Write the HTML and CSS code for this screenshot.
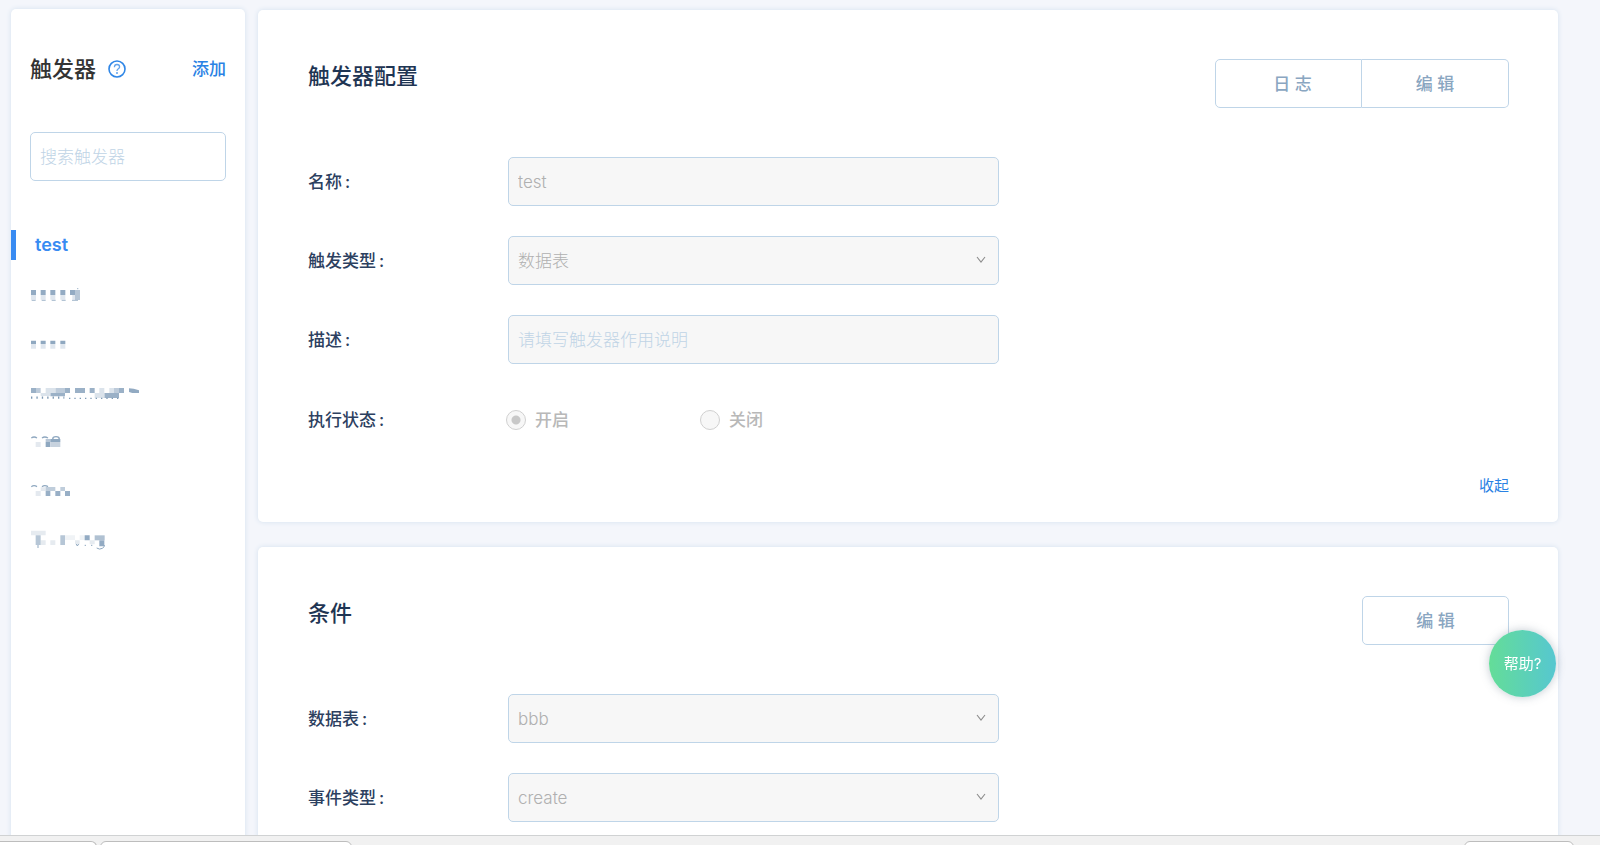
FILE: index.html
```html
<!DOCTYPE html>
<html lang="zh-CN">
<head>
<meta charset="utf-8">
<title>触发器</title>
<link rel="stylesheet" href="styles.css">
</head>
<body>
<div class="workspace">
  <aside class="sidebar">
    <header class="sidebar-head">
      <h1 class="sidebar-title">触发器</h1>
      <a class="hint" href="#" aria-label="说明">
        <svg class="hint-icon" viewBox="0 0 18 18" fill="none"><circle cx="9" cy="9" r="8" stroke="#2f86e6" stroke-width="1.6"/><path d="M6.4 7.3C6.4 5.5 7.5 4.5 9 4.5s2.6 1 2.6 2.4c0 1.8-2.6 1.9-2.6 3.9v.3" stroke="#62a3ec" stroke-width="1.3"/><circle cx="9" cy="13.1" r="1" fill="#62a3ec"/></svg>
      </a>
      <a class="add-link" href="#">添加</a>
    </header>
    <input class="control search" type="text" placeholder="搜索触发器" aria-label="搜索触发器">
    <ul class="trigger-list">
      <li class="trigger active"><a href="#">test</a></li>
      <li class="trigger"><svg class="mosaic" viewBox="90 216 360 72">
        <path fill="#93abc3" d="M93 240h15v15H93zM122 240h15v15h-15zM151 240h15v15h-15zM181 240h15v15h-15zM210 240h15v15h-15z"/>
        <path fill="#dfe6ee" d="M93 255h15v14H93zM122 255h15v14h-15zM151 255h15v14h-15zM181 255h15v14h-15zM217 255h8v14h-8z"/>
        <path fill="#b6c6d6" d="M225 240h15v30h-15z"/><path stroke="#a4b8cc" stroke-width="3" d="M95 271h12M125 271h12M155 271h12M185 271h12M216 271h18M231 236h4"/></svg></li>
      <li class="trigger"><svg class="mosaic" viewBox="90 363 360 72">
        <path fill="#8fa8c0" d="M93 392h15v10H93zM122 392h15v10h-15zM151 392h15v10h-15zM181 392h15v10h-15z"/>
        <path fill="#dfe6ee" d="M93 402h15v14H93zM122 402h15v14h-15zM151 402h15v14h-15zM181 402h15v14h-15z"/></svg></li>
      <li class="trigger"><svg class="mosaic" viewBox="90 510 360 72">
        <path fill="#9bb1c7" d="M93 534h15v15H93zM195 534h15v15h-15zM225 534h30v15h-30zM269 534h15v15h-15zM357 534h15v15h-15zM151 549h44v10h-44zM313 549h44v15h-44z"/>
        <path fill="#bdcbda" d="M108 534h14v15h-14zM166 534h29v15h-29zM342 534h15v15h-15z"/>
        <path fill="#dbe3eb" d="M137 534h29v15h-29zM122 549h29v9h-29zM298 534h15v15h-15zM328 534h14v15h-14zM284 549h29v15h-29z"/>
        <path fill="#92aac2" d="M387 535l14 1 16 5v8h-20l-10-3z"/><path stroke="#7e9ab5" stroke-width="7" stroke-dasharray="4 12.2" d="M93 563h100"/><path stroke="#7e9ab5" stroke-width="4" stroke-dasharray="4 12" d="M207 565h150"/></svg></li>
      <li class="trigger"><svg class="mosaic" viewBox="90 657 360 72">
        <path fill="none" stroke="#8fa8c0" stroke-width="4" d="M94 684q8-6 17 0M126 684q8-6 18 0M158 688q0-8 10-8t10 8"/>
        <path fill="#e4e9ef" d="M107 696h15v15h-15z"/><path fill="#b7c6d6" d="M137 687h14v9h-14z"/><path fill="#8fa8c0" d="M137 696h14v15h-14zM151 687h30v9h-30z"/><path fill="#c7d2de" d="M151 696h30v15h-30z"/></svg></li>
      <li class="trigger"><svg class="mosaic" viewBox="90 804 360 72">
        <path fill="none" stroke="#8fa8c0" stroke-width="4" d="M94 830q8-6 17 0M126 830q8-6 18 0"/>
        <path fill="#e4e9ef" d="M107 843h15v15h-15zM122 832h15v11h-15z"/><path fill="#bfcddb" d="M137 831h29v12h-29zM181 831h14v12h-14z"/><path fill="#98afc6" d="M137 843h14v15h-14zM166 843h15v15h-15zM195 843h15v15h-15z"/></svg></li>
      <li class="trigger"><svg class="mosaic" viewBox="90 951 360 72">
        <path fill="#e6ebf0" d="M93 962h44v14H93zM122 991h15v14h-15zM151 991h15v14h-15zM225 991h14v12h-14zM269 991h15v12h-15z"/>
        <path fill="#b6c6d6" d="M107 976h15v29h-15zM181 976h14v29h-14z"/><path fill="#f0f3f6" d="M195 976h30v14h-30zM239 976h15v14h-15z"/><path fill="#93abc3" d="M254 976h15v15h-15zM298 991h15v18h-15z"/><path fill="#b0c1d2" d="M284 976h30v15h-30z"/>
        <path fill="none" stroke="#8fa8c0" stroke-width="3" d="M114 1005v9M229 1002l3 6 4-6M254 1006h4M273 1006h4M290 1014q9 6 17 1t6-10"/></svg></li>
    </ul>
  </aside>

  <main class="content">
    <section class="panel">
      <header class="panel-head">
        <h2 class="panel-title">触发器配置</h2>
        <div class="actions">
          <button class="action" type="button">日 志</button><button class="action" type="button">编 辑</button>
        </div>
      </header>
      <form class="fields">
        <div class="field">
          <label class="label" for="name">名称<span class="colon">:</span></label>
          <input class="control" id="name" type="text" value="test" disabled>
        </div>
        <div class="field">
          <label class="label" for="type">触发类型<span class="colon">:</span></label>
          <div class="select"><select class="control" id="type" disabled><option>数据表</option></select><svg class="chevron" viewBox="0 0 10 8"><path d="M1 1l4 5 4-5"/></svg></div>
        </div>
        <div class="field">
          <label class="label" for="desc">描述<span class="colon">:</span></label>
          <input class="control" id="desc" type="text" placeholder="请填写触发器作用说明" disabled>
        </div>
        <div class="field field-radio">
          <span class="label" id="state">执行状态<span class="colon">:</span></span>
          <div class="radios" role="radiogroup" aria-labelledby="state">
            <label class="radio"><input type="radio" name="state" checked disabled>开启</label>
            <label class="radio"><input type="radio" name="state" disabled>关闭</label>
          </div>
        </div>
      </form>
      <div class="panel-foot"><a href="#">收起</a></div>
    </section>

    <section class="panel">
      <header class="panel-head">
        <h2 class="panel-title">条件</h2>
        <div class="actions"><button class="action" type="button">编 辑</button></div>
      </header>
      <form class="fields">
        <div class="field">
          <label class="label" for="table">数据表<span class="colon">:</span></label>
          <div class="select"><select class="control" id="table" disabled><option>bbb</option></select><svg class="chevron" viewBox="0 0 10 8"><path d="M1 1l4 5 4-5"/></svg></div>
        </div>
        <div class="field">
          <label class="label" for="event">事件类型<span class="colon">:</span></label>
          <div class="select"><select class="control" id="event" disabled><option>create</option></select><svg class="chevron" viewBox="0 0 10 8"><path d="M1 1l4 5 4-5"/></svg></div>
        </div>
      </form>
    </section>
  </main>
</div>
<footer class="dock">
  <div class="tab tab-first"></div>
  <div class="tab tab-wide"></div>
  <div class="tab tab-last"></div>
</footer>
<button class="help" type="button">帮助?</button>
</body>
</html>
```
FILE: styles.css
```css
* { box-sizing: border-box; }
body {
  margin: 0;
  height: 100vh;
  display: flex;
  flex-direction: column;
  overflow: hidden;
  background: #f4f6fb;
  color: #1f3553;
  font: 17px/24px Inter, "Noto Sans CJK SC", sans-serif;
}
h1, h2, ul { margin: 0; padding: 0; }
a { color: #2a82e4; text-decoration: none; }
button, input, select { font: inherit; }

.workspace {
  flex: 1;
  min-height: 0;
  display: flex;
  gap: 13px;
  padding: 9px 42px 0 11px;
  overflow: hidden;
}
.sidebar, .panel {
  background: #fff;
  border-radius: 5px;
  box-shadow: 0 0 5px #d3e0ee;
}
.sidebar {
  flex: none;
  width: 234px;
  padding-top: 45px;
  margin-bottom: -10px;
}
.sidebar-head {
  display: flex;
  align-items: center;
  height: 30px;
  margin: 0 19px 48px;
}
.sidebar-title { color: #333; font-size: 22px; font-weight: 500; }
.hint { display: flex; margin-left: 12px; }
.hint-icon { width: 18px; height: 18px; }
.add-link { margin-left: auto; font-weight: 500; }

.control {
  display: block;
  width: 100%;
  height: 49px;
  padding: 0 9px;
  border: 1px solid #bfd5e8;
  border-radius: 5px;
  background: #fff;
  color: #b8b8b8;
  font-weight: 300;
  outline: 0;
  appearance: none;
}
.control:disabled { background: #f7f7f7; color: #b0b0b0; opacity: 1; }
.control::placeholder { color: #c0d4e6; opacity: 1; }
.search { width: calc(100% - 38px); margin: 0 19px; }

.trigger-list {
  display: flex;
  flex-direction: column;
  gap: 19px;
  margin-top: 49px;
  list-style: none;
}
.trigger { display: flex; align-items: center; height: 30px; padding-left: 19px; }
.trigger.active { border-left: 5px solid #388bf2; }
.trigger.active a { color: #388bf2; font-size: 18px; font-weight: 600; }
.mosaic { width: 120px; height: 24px; }

.content {
  flex: 1;
  min-width: 0;
  display: flex;
  flex-direction: column;
  gap: 25px;
  padding-top: 1px;
}
.panel { flex: none; padding: 49px 49px 26px 50px; }
.panel-head {
  display: flex;
  justify-content: space-between;
  align-items: flex-start;
  margin-bottom: 49px;
}
.panel-title { font-size: 22px; line-height: 34px; font-weight: 500; }
.actions { display: flex; }
.action {
  width: 147px;
  height: 49px;
  padding: 0;
  border: 1px solid #bfd5e8;
  background: #fff;
  color: #8aa6c1;
  font-weight: 500;
}
.action:first-child { padding-left: 8px; border-radius: 5px 0 0 5px; }
.action:last-child { border-radius: 0 5px 5px 0; }
.action:only-child { padding-left: 0; border-radius: 5px; }
.action + .action { border-left: 0; }

.fields { display: flex; flex-direction: column; gap: 30px; }
.field {
  display: grid;
  grid-template-columns: 200px minmax(0, 491px);
  align-items: center;
}
.field-radio { height: 52px; }
.label { color: #2c4060; font-weight: 500; }
.colon { margin-left: 3px; }
.select { position: relative; }
.chevron {
  position: absolute;
  top: 20px;
  right: 13px;
  width: 10px;
  height: 8px;
  fill: none;
  stroke: #8c8c8c;
  stroke-width: 1.1;
  pointer-events: none;
}
.radios { display: grid; grid-template-columns: 194px 194px; margin-left: -2px; }
.radio { display: flex; align-items: center; gap: 9px; color: #b8b8b8; font-weight: 500; }
.radio input {
  appearance: none;
  width: 20px;
  height: 20px;
  margin: 0;
  border: 1px solid #d0d0d0;
  border-radius: 50%;
  background: #f7f7f7;
}
.radio input:checked { background: radial-gradient(circle, #c8c8c8 4px, #f7f7f7 5px); }
.panel-foot { margin-top: 30px; font-size: 15px; line-height: 20px; text-align: right; }

.dock {
  z-index: 1;
  flex: none;
  display: flex;
  gap: 3px;
  height: 10px;
  padding: 5px 26px 0 0;
  border-top: 1px solid #d0d2d3;
  background: #f1f1f1;
  overflow: hidden;
}
.tab { height: 30px; border: 1px solid #bdbdbd; border-radius: 6px; background: #fff; }
.tab-first { width: 97px; border-left: 0; border-top-left-radius: 0; }
.tab-wide { width: 252px; }
.tab-last { width: 110px; margin-left: auto; }

.help {
  position: fixed;
  right: 44px;
  bottom: 148px;
  width: 67px;
  height: 67px;
  padding: 0;
  border: 0;
  border-radius: 50%;
  background: linear-gradient(90deg, #64dd98, #56c7d0);
  box-shadow: 0 0 10px rgba(80, 100, 120, .35);
  color: #fff;
  font-size: 15px;
}
```
